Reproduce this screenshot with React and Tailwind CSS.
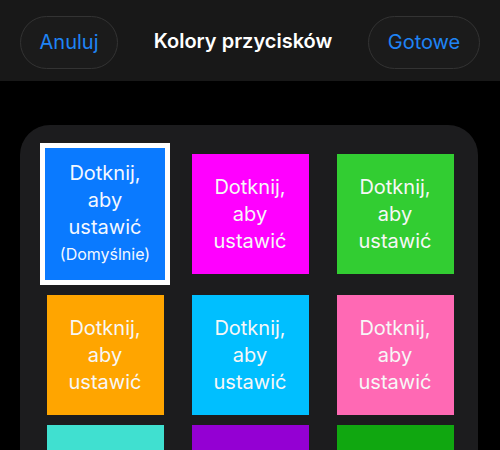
const tiles = [
  { bg: "bg-[#0a7aff]", selected: true },
  { bg: "bg-[#ff00ff]" },
  { bg: "bg-[#32cd32]" },
  { bg: "bg-[#ffa500]" },
  { bg: "bg-[#00bfff]" },
  { bg: "bg-[#ff69b4]" },
  { bg: "bg-[#40e0d0]" },
  { bg: "bg-[#9400d3]" },
  { bg: "bg-[#10a710]" },
];

function Tile({ bg, selected }) {
  if (selected) {
    return (
      <div className="w-[130px] h-[142px] border-[5px] border-white">
        <div className={`w-full h-full ${bg} flex flex-col items-center justify-center text-[#f4f8ff] text-center text-[20px] leading-[27px]`}>
          <span>Dotknij,</span>
          <span>aby</span>
          <span>ustawić</span>
          <span className="text-[16px] leading-[27px]">(Domyślnie)</span>
        </div>
      </div>
    );
  }
  return (
    <div className={`w-[117px] h-[120px] ${bg} flex flex-col items-center justify-center text-[#f7f7f7] text-center text-[20px] leading-[27px]`}>
      <span>Dotknij,</span>
      <span>aby</span>
      <span>ustawić</span>
    </div>
  );
}

export default function App() {
  return (
    <div className="w-[500px] h-[450px] overflow-hidden bg-black font-['Inter',sans-serif]">
      <div className="h-[81px] bg-[#181818] flex items-center justify-between px-5 pt-[3px]">
        <button className="h-[53px] w-[98px] rounded-full border border-[#333] bg-[#1b1b1b] text-[#1f84f5] text-[20px]">
          Anuluj
        </button>
        <div className="text-white text-[20px] font-semibold pb-[2px]">Kolory przycisków</div>
        <button className="h-[53px] w-[112px] rounded-full border border-[#333] bg-[#1b1b1b] text-[#1f84f5] text-[20px]">
          Gotowe
        </button>
      </div>
      <div className="mx-5 mr-[22px] mt-[44px] bg-[#1c1c1e] rounded-[30px] pt-[18px] pl-5 pr-[18px] pb-5">
        <div className="grid grid-cols-3 gap-x-[15px] gap-y-[10px] justify-items-center items-center">
          {tiles.map((t, i) => (
            <Tile key={i} {...t} />
          ))}
        </div>
      </div>
    </div>
  );
}
